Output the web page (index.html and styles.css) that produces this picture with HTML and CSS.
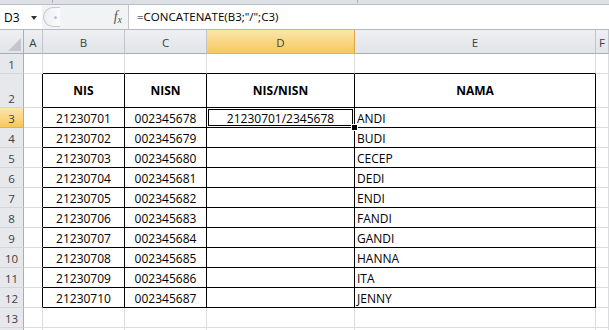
FILE: index.html
```html
<!DOCTYPE html>
<html lang="id">
<head>
    <meta charset="UTF-8">
    <meta name="viewport" content="width=device-width, initial-scale=1.0">
    <title>CONCATENATE NIS/NISN</title>
    <link rel="stylesheet" href="styles.css">
</head>
<body>
    <!-- sisa pita (ribbon) di atas -->
    <div class="ribbon-edge"><span class="tick tick-a"></span><span class="tick tick-b"></span></div>

    <!-- baris rumus -->
    <div class="formula-bar">
        <div class="name-box"><span class="name">D3</span><span class="drop"></span></div>
        <div class="splitter"><span class="dot"></span></div>
        <div class="fx"><i>f</i><i class="x">x</i></div>
        <div class="formula">=CONCATENATE(B3;"/";C3)</div>
    </div>

    <!-- lembar kerja -->
    <div class="sheet">
        <div class="c corner"><span class="tri"></span></div>
        <div class="c hd">A</div>
        <div class="c hd">B</div>
        <div class="c hd">C</div>
        <div class="c hd sel">D</div>
        <div class="c hd">E</div>
        <div class="c hd">F</div>

        <div class="c rh">1</div>
        <div class="c"></div>
        <div class="c edge-b"></div>
        <div class="c edge-b"></div>
        <div class="c edge-b"></div>
        <div class="c edge-b"></div>
        <div class="c"></div>

        <div class="c rh">2</div>
        <div class="c edge-r"></div>
        <div class="c t th">NIS</div>
        <div class="c t th">NISN</div>
        <div class="c t th">NIS/NISN</div>
        <div class="c t th">NAMA</div>
        <div class="c"></div>

        <div class="c rh sel">3</div>
        <div class="c edge-r"></div>
        <div class="c t ctr">21230701</div>
        <div class="c t ctr">002345678</div>
        <div class="c t ctr active">21230701/2345678<span class="frame"></span><span class="handle"></span></div>
        <div class="c t">ANDI</div>
        <div class="c"></div>

        <div class="c rh">4</div>
        <div class="c edge-r"></div>
        <div class="c t ctr">21230702</div>
        <div class="c t ctr">002345679</div>
        <div class="c t"></div>
        <div class="c t">BUDI</div>
        <div class="c"></div>

        <div class="c rh">5</div>
        <div class="c edge-r"></div>
        <div class="c t ctr">21230703</div>
        <div class="c t ctr">002345680</div>
        <div class="c t"></div>
        <div class="c t">CECEP</div>
        <div class="c"></div>

        <div class="c rh">6</div>
        <div class="c edge-r"></div>
        <div class="c t ctr">21230704</div>
        <div class="c t ctr">002345681</div>
        <div class="c t"></div>
        <div class="c t">DEDI</div>
        <div class="c"></div>

        <div class="c rh">7</div>
        <div class="c edge-r"></div>
        <div class="c t ctr">21230705</div>
        <div class="c t ctr">002345682</div>
        <div class="c t"></div>
        <div class="c t">ENDI</div>
        <div class="c"></div>

        <div class="c rh">8</div>
        <div class="c edge-r"></div>
        <div class="c t ctr">21230706</div>
        <div class="c t ctr">002345683</div>
        <div class="c t"></div>
        <div class="c t">FANDI</div>
        <div class="c"></div>

        <div class="c rh">9</div>
        <div class="c edge-r"></div>
        <div class="c t ctr">21230707</div>
        <div class="c t ctr">002345684</div>
        <div class="c t"></div>
        <div class="c t">GANDI</div>
        <div class="c"></div>

        <div class="c rh">10</div>
        <div class="c edge-r"></div>
        <div class="c t ctr">21230708</div>
        <div class="c t ctr">002345685</div>
        <div class="c t"></div>
        <div class="c t">HANNA</div>
        <div class="c"></div>

        <div class="c rh">11</div>
        <div class="c edge-r"></div>
        <div class="c t ctr">21230709</div>
        <div class="c t ctr">002345686</div>
        <div class="c t"></div>
        <div class="c t">ITA</div>
        <div class="c"></div>

        <div class="c rh">12</div>
        <div class="c edge-r"></div>
        <div class="c t ctr">21230710</div>
        <div class="c t ctr">002345687</div>
        <div class="c t"></div>
        <div class="c t">JENNY</div>
        <div class="c"></div>

        <div class="c rh">13</div>
        <div class="c"></div>
        <div class="c"></div>
        <div class="c"></div>
        <div class="c"></div>
        <div class="c"></div>
        <div class="c"></div>

        <!-- baris 14, hanya tepinya yang terlihat -->
        <div class="c rh peek"></div>
        <div class="c peek"></div>
        <div class="c peek"></div>
        <div class="c peek"></div>
        <div class="c peek"></div>
        <div class="c peek"></div>
        <div class="c peek"></div>
    </div>
</body>
</html>
```

FILE: styles.css
```css
body {
    margin: 0;
    padding: 0;
    width: 609px;
    height: 330px;
    overflow: hidden;
    background: #fff;
    font-family: "Open Sans", "Liberation Sans", sans-serif;
    color: #000;
}

/* pita */
.ribbon-edge {
    height: 4px;
    background: #dde1e6;
    border-bottom: 1px solid #b7bec7;
    display: flex;
}

.tick {
    width: 1px;
    height: 3px;
    background: #a9b0b9;
}

.tick-a {
    margin-left: 52px;
}

.tick-b {
    margin-left: 304px;
}

/* baris rumus */
.formula-bar {
    display: flex;
    height: 24px;
    background: #f2f3f5;
    border-bottom: 1px solid #b4bac2;
}

.name-box {
    width: 42px;
    background: #fff;
    display: flex;
    align-items: center;
    box-sizing: border-box;
    padding-left: 4px;
    font-size: 12px;
}

.name {
    width: 27px;
}

.drop {
    width: 0;
    height: 0;
    border-left: 3px solid transparent;
    border-right: 3px solid transparent;
    border-top: 4px solid #333;
    margin-top: 1px;
}

.splitter {
    width: 13px;
    margin: 2px 0 2px 1px;
    border: 1px solid #c4c9cf;
    border-right: none;
    border-radius: 10px 0 0 10px;
    background: linear-gradient(to right, #eceef1, #fafbfc);
    display: flex;
    align-items: center;
    justify-content: flex-end;
    padding-right: 3px;
}

.dot {
    width: 3px;
    height: 3px;
    border-radius: 50%;
    background: #b9c4d0;
}

.fx {
    width: 68px;
    box-sizing: border-box;
    display: flex;
    align-items: center;
    justify-content: flex-end;
    padding-right: 6px;
    font-family: "Liberation Serif", serif;
    color: #555;
    font-size: 14px;
}

.fx .x {
    font-size: 10px;
    margin-top: 4px;
}

.formula {
    flex: 1;
    background: #fff;
    border-left: 1px solid #c2c7ce;
    padding-left: 8px;
    font-size: 11.5px;
    line-height: 24px;
    white-space: nowrap;
}

/* lembar */
.sheet {
    display: grid;
    grid-template-columns: 24px 19px 82px 82px 148px 241px 13px;
    grid-template-rows: 24px 20px 34px repeat(11, 20px) 2px;
}

.c {
    box-sizing: border-box;
    border-right: 1px solid #dadcdd;
    border-bottom: 1px solid #dadcdd;
    display: flex;
    align-items: flex-end;
    padding: 0 2px;
    font-size: 12px;
    line-height: 16px;
    white-space: nowrap;
    overflow: hidden;
}

.peek {
    border-bottom: none;
}

.hd,
.rh,
.corner {
    background: linear-gradient(#eef0f3, #e1e4e8);
    color: #3b3f45;
    font-size: 11.5px;
    justify-content: center;
    border-right-color: #c1c5cb;
    border-bottom-color: #c1c5cb;
}

.hd {
    align-items: center;
    padding: 2px 0 0;
    border-bottom-color: #a9aeb5;
}

.rh {
    background: #e6e8ec;
    border-bottom-color: #d3d6da;
    border-right-color: #a9aeb5;
}

.hd.sel,
.rh.sel {
    background: linear-gradient(#fbe6ab, #f6c85c);
    border-bottom-color: #e6b04a;
    border-right-color: #d9a648;
}

.corner {
    border-bottom-color: #a9aeb5;
    border-right-color: #a9aeb5;
    align-items: flex-end;
    justify-content: flex-end;
    padding: 0 2px 2px 0;
}

.tri {
    width: 0;
    height: 0;
    border-left: 13px solid transparent;
    border-bottom: 13px solid #c3c7cd;
}

/* tabel data */
.t {
    border-right-color: #000;
    border-bottom-color: #000;
}

.edge-r {
    border-right-color: #000;
}

.edge-b {
    border-bottom-color: #000;
}

.th {
    font-weight: bold;
    align-items: center;
    justify-content: center;
}

.ctr {
    justify-content: center;
}

.active {
    position: relative;
    overflow: visible;
}

.frame {
    position: absolute;
    top: -1px;
    left: -1px;
    right: -1px;
    bottom: -1px;
    border: 1px solid #000;
    box-shadow: inset 0 0 0 1px #fff, inset 0 0 0 2px #000;
}

.handle {
    position: absolute;
    right: -3px;
    bottom: -3px;
    width: 5px;
    height: 5px;
    background: #000;
    box-shadow: 0 0 0 1px #fff;
}
```
